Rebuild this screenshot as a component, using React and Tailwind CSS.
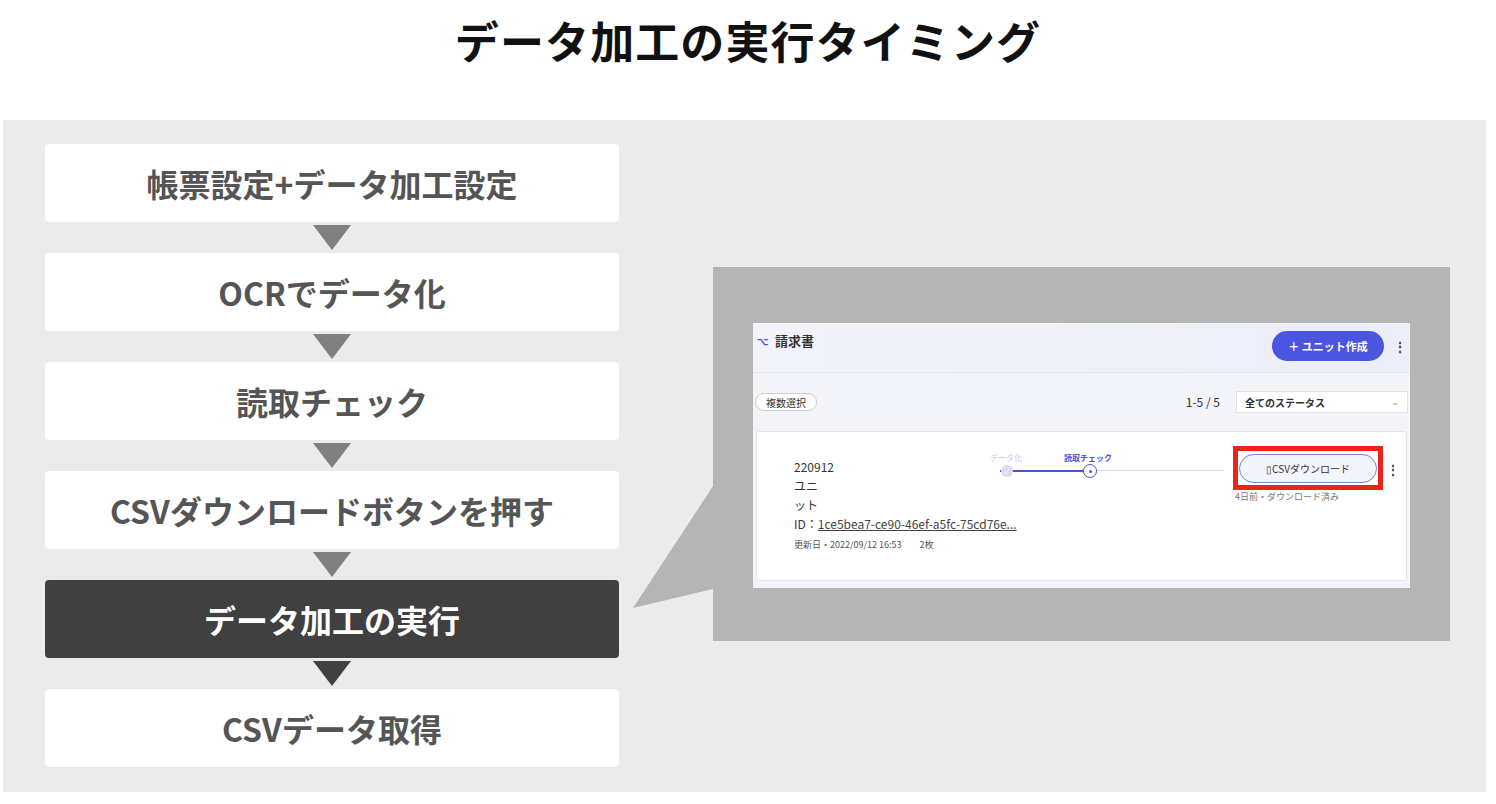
export default function App() {
  const f = { fontFamily: '"Noto Sans CJK JP", "Noto Sans", sans-serif' };
  const steps = ["帳票設定+データ加工設定", "OCRでデータ化", "読取チェック", "CSVダウンロードボタンを押す", "データ加工の実行", "CSVデータ取得"];
  return (
    <div className="w-[1496px] h-[804px] bg-white relative overflow-hidden" style={f}>
      <h1 className="text-center text-[44px] font-bold text-[#111] h-[112px] pt-[8px] leading-[64px] tracking-wide">データ加工の実行タイミング</h1>
      <div className="absolute left-[3px] top-[120px] w-[1483px] h-[672px] bg-[#ebebeb] flex">
        <div className="ml-[42px] mt-[24px] w-[574px] flex flex-col">
          {steps.map((s, i) => (
            <div key={i} className="flex flex-col items-center">
              <div className={`w-[574px] h-[78px] rounded-[4px] flex items-center justify-center text-[32px] font-bold ${i === 4 ? "bg-[#404040] text-white" : "bg-white text-[#555]"}`}>{s}</div>
              {i < 5 && (
                <svg width="40" height="31" viewBox="0 0 40 31"><polygon points="1,3 39,3 20,28" fill={i === 4 ? "#404040" : "#808080"} /></svg>
              )}
            </div>
          ))}
        </div>
        <svg className="absolute left-[630px] top-[360px]" width="90" height="130" viewBox="0 0 90 130"><polygon points="0,128 84,0 84,108" fill="#b5b5b5" /></svg>
        <div className="ml-[94px] mt-[147px] w-[737px] h-[374px] bg-[#b5b5b5] relative">
          <div className="absolute left-[40px] top-[56px] w-[657px] h-[265px] bg-[#f3f4f9] text-[#333] flex flex-col">
            <div className="h-[50px] flex items-start justify-between px-[4px] pt-[8px] bg-gradient-to-r from-[#f3f4fa] to-[#eceef8] border-b border-[#e4e6ee]">
              <div className="flex items-center gap-[6px] text-[13px] font-bold"><span className="text-[#4b52d9] text-[10px]">⌥</span>請求書</div>
              <div className="flex items-center gap-[10px] mt-[0px]">
                <div className="bg-[#4b55e0] text-white text-[11px] font-bold rounded-full w-[112px] h-[30px] flex items-center justify-center">＋ ユニット作成</div>
                <span className="text-[12px] font-bold">⋮</span>
              </div>
            </div>
            <div className="h-[58px] flex items-center justify-between px-[2px]">
              <div className="border border-[#ccc] bg-white rounded-full text-[10px] px-[10px] h-[18px] flex items-center">複数選択</div>
              <div className="flex items-center gap-[16px]">
                <span className="text-[12px]">1-5 / 5</span>
                <div className="w-[172px] h-[22px] bg-white border border-[#e2e2e2] text-[10px] font-bold px-[8px] flex items-center justify-between">全てのステータス<span className="text-[#aaa] text-[8px]">⌄</span></div>
              </div>
            </div>
            <div className="mx-[3px] h-[150px] bg-white border border-[#e4e4e4] rounded-[3px] relative">
              <div className="absolute left-[37px] top-[25px] text-[12px] leading-[19px]">
                <div>220912</div><div>ユニ</div><div>ット</div>
                <div>ID：<span className="underline text-[#444]">1ce5bea7-ce90-46ef-a5fc-75cd76e...</span></div>
                <div className="text-[9px] text-[#555] mt-[2px]">更新日・2022/09/12 16:53　　2枚</div>
              </div>
              <div className="absolute left-[233px] top-[20px] text-[8px] text-[#c8cbe8]">データ化</div>
              <div className="absolute left-[307px] top-[20px] text-[8px] text-[#4b52d9] font-bold">読取チェック</div>
              <div className="absolute left-[243px] top-[38px] w-[84px] h-[2px] bg-[#4b52d9]" />
              <div className="absolute left-[327px] top-[38px] w-[140px] h-[1px] bg-[#ddd]" />
              <div className="absolute left-[244px] top-[33px] w-[12px] h-[12px] rounded-full bg-[#d8daf0] text-white text-[7px] flex items-center justify-center">✓</div>
              <div className="absolute left-[326px] top-[32px] w-[14px] h-[14px] rounded-full bg-white border border-[#4b52d9] flex items-center justify-center"><div className="w-[3px] h-[3px] rounded-full bg-[#4b52d9]" /></div>
              <div className="absolute left-[476px] top-[14px] w-[150px] h-[44px] border-[5px] border-[#e8261c]" />
              <div className="absolute left-[482px] top-[22px] w-[138px] h-[29px] rounded-full border border-[#7a80e0] bg-[#f4f4fc] text-[10px] text-[#333] flex items-center justify-center">▯CSVダウンロード</div>
              <div className="absolute left-[630px] top-[28px] text-[12px] font-bold">⋮</div>
              <div className="absolute left-[478px] top-[58px] text-[9px] text-[#777]">4日前・ダウンロード済み</div>
            </div>
          </div>
        </div>
      </div>
    </div>
  );
}
